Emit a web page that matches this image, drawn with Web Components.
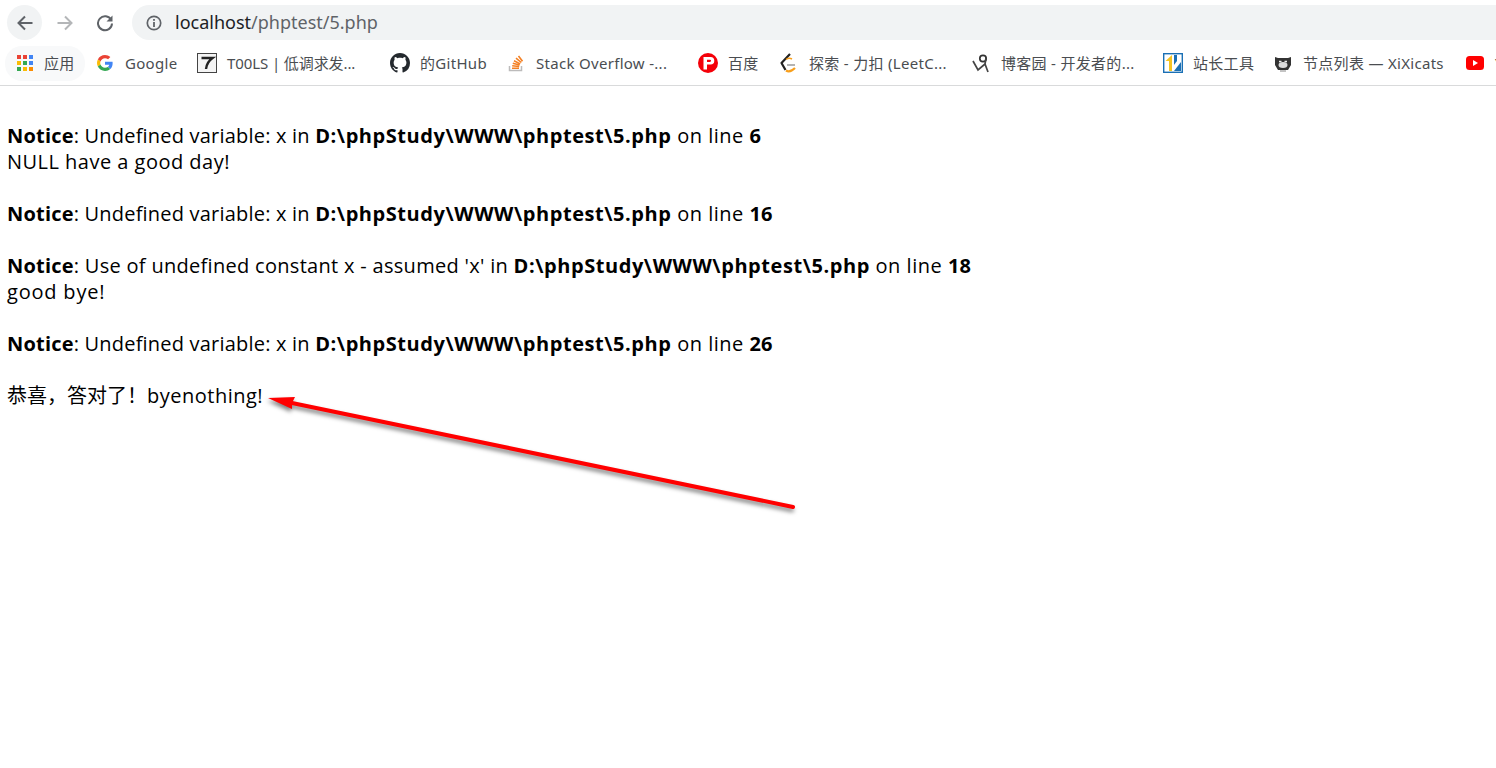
<!DOCTYPE html>
<html>
<head>
<meta charset="utf-8">
<title>5.php</title>
<style>
html,body{margin:0;padding:0;background:#fff;overflow:hidden;}
body{width:1496px;height:768px;position:relative;font-family:"Open Sans","Noto Sans CJK SC",sans-serif;}
.apps{background:#f8f9fa;border-radius:17px;}
</style>
</head>
<body>
<browser-toolbar></browser-toolbar>
<bookmark-bar>
    <book-mark class="apps" icon="apps" gap="11" width="80">应用</book-mark>
    <book-mark icon="google" width="102">Google</book-mark>
    <book-mark icon="tools" width="193" style="letter-spacing:-.1px">T00LS | 低调求发...</book-mark>
    <book-mark icon="github" width="116">的GitHub</book-mark>
    <book-mark icon="so" width="192">Stack Overflow -...</book-mark>
    <book-mark icon="baidu" width="81">百度</book-mark>
    <book-mark icon="leet" width="192">探索 - 力扣 (LeetC...</book-mark>
    <book-mark icon="cnblogs" width="192">博客园 - 开发者的...</book-mark>
    <book-mark icon="zz" width="110">站长工具</book-mark>
    <book-mark icon="cat" width="192">节点列表 — XiXicats</book-mark>
    <book-mark icon="yt" width="41">Y</book-mark>
</bookmark-bar>
<php-output>
    <br>
    <php-notice msg="Undefined variable: x" line="6"></php-notice>
    <span style="letter-spacing:.48px">NULL have a good day!</span><br>
    <br>
    <php-notice msg="Undefined variable: x" line="16"></php-notice>
    <br>
    <php-notice msg="Use of undefined constant x - assumed 'x'" line="18" spacing=".3"></php-notice>
    <span style="letter-spacing:.8px">good bye!</span><br>
    <br>
    <php-notice msg="Undefined variable: x" line="26"></php-notice>
    <br>
    恭喜，答对了！<span style="letter-spacing:.5px">byenothing!</span>
</php-output>
<red-arrow></red-arrow>

<script>
const ICONS = {
    apps: `<svg width="16" height="16" viewBox="0 0 16 16">
        <rect x="0" y="0" width="4" height="4" fill="#ea4335"/><rect x="6" y="0" width="4" height="4" fill="#ea4335"/><rect x="12" y="0" width="4" height="4" fill="#4285f4"/>
        <rect x="0" y="6" width="4" height="4" fill="#fbbc05"/><rect x="6" y="6" width="4" height="4" fill="#34a853"/><rect x="12" y="6" width="4" height="4" fill="#4285f4"/>
        <rect x="0" y="12" width="4" height="4" fill="#34a853"/><rect x="6" y="12" width="4" height="4" fill="#fbbc05"/><rect x="12" y="12" width="4" height="4" fill="#fb8c00"/></svg>`,
    google: `<svg width="16" height="16" viewBox="0 0 48 48"><path fill="#ea4335" d="M24 9.500c3.500 0 6.700 1.200 9.200 3.600l6.900-6.900C35.900 2.400 30.500 0 24 0 14.600 0 6.500 5.400 2.600 13.200l8 6.200C12.400 13.700 17.700 9.500 24 9.500z"/><path fill="#4285f4" d="M46.900 24.500c0-1.600-.1-3.100-.4-4.500H24v9h12.900c-.6 3-2.200 5.500-4.700 7.200l7.700 6c4.500-4.200 7-10.300 7-17.700z"/><path fill="#fbbc05" d="M10.500 28.600c-.5-1.400-.8-3-.8-4.600s.3-3.200.8-4.600l-8-6.200C.9 16.500 0 20.100 0 24s.9 7.500 2.600 10.800l7.900-6.200z"/><path fill="#34a853" d="M24 48c6.500 0 11.900-2.100 15.900-5.800l-7.700-6c-2.200 1.400-4.900 2.300-8.200 2.300-6.300 0-11.600-4.200-13.500-9.900l-8 6.200C6.500 42.600 14.600 48 24 48z"/></svg>`,
    tools: `<svg width="20" height="20" viewBox="0 0 20 20"><rect x=".5" y=".5" width="19" height="19" fill="#f4f4f4" stroke="#444"/><path d="M4.500 5h11c-3.500 2.500-6 6-6.500 11" fill="none" stroke="#222" stroke-width="2.400"/></svg>`,
    github: `<svg width="20" height="20" viewBox="0 0 16 16"><path fill="#24292e" d="M8 0C3.580 0 0 3.580 0 8c0 3.540 2.290 6.530 5.470 7.590.4.070.55-.17.55-.38 0-.19-.01-.82-.01-1.490-2.010.37-2.530-.49-2.690-.94-.09-.23-.48-.94-.82-1.130-.28-.15-.68-.52-.01-.53.630-.01 1.080.58 1.230.82.720 1.210 1.870.87 2.330.66.070-.52.280-.87.510-1.070-1.780-.2-3.640-.89-3.640-3.950 0-.87.310-1.590.820-2.150-.08-.2-.36-1.020.08-2.120 0 0 .67-.21 2.200.82.640-.18 1.320-.27 2-.27s1.360.09 2 .27c1.530-1.040 2.200-.82 2.200-.82.440 1.100.16 1.920.08 2.120.51.560.82 1.270.82 2.150 0 3.070-1.870 3.750-3.650 3.950.29.250.54.730.54 1.480 0 1.070-.01 1.930-.01 2.200 0 .21.150.460.550.380A8.010 8.010 0 0016 8c0-4.420-3.580-8-8-8z"/></svg>`,
    so: `<svg width="16" height="18" viewBox="0 0 16 18"><path d="M1.500 12v4.500h12V12" fill="none" stroke="#bcbbbb" stroke-width="1.500"/><path d="M4 14.200h7M4.200 11.800l7 .7M4.800 9.200l6.800 1.900M6 6.700l6.200 3.200M8 4.200l5.300 4.300M10.500 2l4 5.300" stroke="#f48024" stroke-width="1.600" fill="none"/></svg>`,
    baidu: `<svg width="20" height="20" viewBox="0 0 20 20"><circle cx="10" cy="10" r="10" fill="#f40009"/><path fill-rule="evenodd" fill="#fff" d="M5.500 4h7a3.800 3.800 0 010 7.600H9v4.900H5.500zM9 6.800v2.100h3a1 1 0 000-2.100z"/></svg>`,
    leet: `<svg width="18" height="20" viewBox="0 0 18 20"><path d="M10 1L1.500 10l4 7" fill="none" stroke="#222" stroke-width="2.200" stroke-linejoin="round"/><path d="M7 12h8" stroke="#b3b3b3" stroke-width="2"/><path d="M6 17.500Q10 20 15 15" fill="none" stroke="#f89f1b" stroke-width="2.200"/><path d="M6 6.500Q9 4.500 12 6" fill="none" stroke="#f89f1b" stroke-width="1.500"/></svg>`,
    cnblogs: `<svg width="20" height="20" viewBox="0 0 20 20"><circle cx="12" cy="5.500" r="3.200" fill="none" stroke="#333" stroke-width="1.700"/><path d="M2 8l5 9 7-6 3 8M15 5l-1 6" fill="none" stroke="#444" stroke-width="1.700"/></svg>`,
    zz: `<svg width="20" height="20" viewBox="0 0 20 20"><rect x=".7" y=".7" width="18.600" height="18.600" fill="#fff" stroke="#1b70b5" stroke-width="1.400"/><path d="M2.500 8L9 2v16H6V8z" fill="#f5c422"/><path d="M11 18l7-9v9z" fill="#1b70b5"/><path d="M11 2h3v6l-3 4z" fill="#1b70b5"/></svg>`,
    cat: `<svg width="18" height="18" viewBox="0 0 18 18"><path d="M1 3l3 1h10l3-1v8l-3 5H4l-3-5z" fill="#333"/><ellipse cx="9" cy="11" rx="4.500" ry="3" fill="#ddd"/><path d="M5 7.500h2.500M10.500 7.500H13" stroke="#eee" stroke-width="1.500"/><path d="M6 17h6" stroke="#888"/></svg>`,
    yt: `<svg width="18" height="14" viewBox="0 0 18 14"><rect width="18" height="14" rx="3.500" fill="#f00"/><path d="M7 4l5 3-5 3z" fill="#fff"/></svg>`
};

class BrowserToolbar extends HTMLElement{
    constructor(){
        super();
        this.attachShadow({mode:'open'}).innerHTML = `
            <style>
                :host{display:flex;height:45px;box-sizing:border-box;align-items:center;padding:0 0 0 7px;font-family:"Noto Sans","Noto Sans CJK SC",sans-serif;}
                .btn{width:35px;height:35px;border-radius:50%;display:flex;align-items:center;justify-content:center;margin-right:5px;flex:none;}
                .back{background:#f1f3f4;}
                .omni{flex:1;height:35px;margin-left:5px;background:#f1f3f4;border-radius:18px 0 0 18px;display:flex;align-items:center;padding-left:14px;font-size:18px;color:#5f6368;}
                .omni b{font-weight:400;color:#202124;}
                .omni svg{margin-right:13px;flex:none;}
                .omni span{position:relative;top:-1px;}
            </style>
            <div class="btn back"><svg width="18" height="18" viewBox="0 0 18 18"><path d="M16.500 9H3M9 2.500L2.500 9 9 15.500" fill="none" stroke="#5f6368" stroke-width="2"/></svg></div>
            <div class="btn"><svg width="18" height="18" viewBox="0 0 18 18"><path d="M1.500 9H15M9 2.500L15.500 9 9 15.500" fill="none" stroke="#b4b6b8" stroke-width="2"/></svg></div>
            <div class="btn"><svg width="18" height="18" viewBox="0 0 18 18"><path d="M15.200 6A7 7 0 1016 9.500" fill="none" stroke="#5f6368" stroke-width="2"/><path d="M16.500 1.500v6h-6z" fill="#5f6368"/></svg></div>
            <div class="omni"><svg width="16" height="16" viewBox="0 0 16 16"><circle cx="8" cy="8" r="6.700" fill="none" stroke="#5f6368" stroke-width="1.700"/><rect x="7.100" y="7" width="1.800" height="5" fill="#5f6368"/><rect x="7.100" y="4" width="1.800" height="1.800" fill="#5f6368"/></svg><span><b>localhost</b>/phptest/5.php</span></div>
        `;
    }
}

class BookmarkBar extends HTMLElement{
    constructor(){
        super();
        this.attachShadow({mode:'open'}).innerHTML = `
            <style>
                :host{display:flex;height:41px;box-sizing:border-box;align-items:center;padding:0 0 4px 5px;border-bottom:1px solid #d9dadb;overflow:hidden;white-space:nowrap;}
            </style>
            <slot></slot>
        `;
    }
}

class BookMark extends HTMLElement{
    connectedCallback(){
        const gap = this.getAttribute('gap') || 12;
        this.shadowRoot || this.attachShadow({mode:'open'});
        this.shadowRoot.innerHTML = `
            <style>
                :host{display:flex;align-items:center;flex:none;height:35px;box-sizing:border-box;padding-left:10px;width:${this.getAttribute('width')}px;font:15px "Noto Sans","Noto Sans CJK SC",sans-serif;letter-spacing:.3px;color:#4a4d51;overflow:hidden;}
                .ic{display:flex;width:20px;justify-content:center;margin-right:${gap - 2}px;flex:none;}
                .tx{margin-top:-1px;}
            </style>
            <span class="ic">${ICONS[this.getAttribute('icon')]}</span><span class="tx"><slot></slot></span>
        `;
    }
}

class PhpOutput extends HTMLElement{
    constructor(){
        super();
        this.attachShadow({mode:'open'}).innerHTML = `
            <style>
                :host{display:block;padding:11px 8px 0 7px;font:20px/26px "Open Sans","Noto Sans CJK SC",sans-serif;color:#000;}
            </style>
            <slot></slot>
        `;
    }
}

class PhpNotice extends HTMLElement{
    connectedCallback(){
        const spacing = this.getAttribute('spacing') || '.2';
        this.shadowRoot || this.attachShadow({mode:'open'});
        this.shadowRoot.innerHTML = `
            <style>
                :host{display:block;letter-spacing:${spacing}px;}
                b{font-weight:700;letter-spacing:.2px;}
                .path{letter-spacing:.56px;}
                .on{letter-spacing:.5px;}
            </style>
            <b>Notice</b>: ${this.getAttribute('msg')} in <b class="path">D:\\phpStudy\\WWW\\phptest\\5.php</b><span class="on"> on line </span><b>${this.getAttribute('line')}</b>
        `;
    }
}

class RedArrow extends HTMLElement{
    constructor(){
        super();
        this.attachShadow({mode:'open'}).innerHTML = `
            <style>
                :host{position:absolute;left:260px;top:385px;width:545px;height:135px;display:block;}
                svg{display:block;overflow:visible;filter:drop-shadow(-1px 3px 2px rgba(0,0,0,.5));}
            </style>
            <svg width="545" height="135" viewBox="0 0 545 135">
                <path d="M533 122L32 18" stroke="#f00" stroke-width="4" stroke-linecap="round"/>
                <path d="M8 13L35 12L32 18L32 24z" fill="#f00"/>
            </svg>
        `;
    }
}

customElements.define('browser-toolbar',BrowserToolbar);
customElements.define('bookmark-bar',BookmarkBar);
customElements.define('book-mark',BookMark);
customElements.define('php-output',PhpOutput);
customElements.define('php-notice',PhpNotice);
customElements.define('red-arrow',RedArrow);
</script>
</body>
</html>
